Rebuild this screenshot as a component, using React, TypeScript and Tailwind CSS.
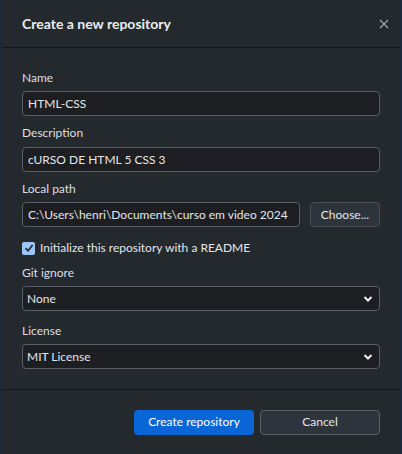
import { useState } from "react";

const Label = ({ text }: { text: string }) => (
  <div className="text-[12px] leading-[16px] text-[#dcdfe3] mb-[5px]">{text}</div>
);

const Chevron = () => (
  <svg width="10" height="10" viewBox="0 0 10 10" className="absolute right-[6px] top-[7px]">
    <path d="M1.5 3 L5 6.5 L8.5 3" stroke="#f0f0f0" strokeWidth="2" fill="none" />
  </svg>
);

const SelectBox = ({ value }: { value: string }) => (
  <div className="relative h-[25px] w-full rounded-[4px] border border-[#5b6068] bg-[#1c1e22] pl-[4px] text-[12px] leading-[23px] text-[#e4e6e9]">
    {value}
    <Chevron />
  </div>
);

const App = () => {
  const [name, setName] = useState("HTML-CSS");
  const [desc, setDesc] = useState("cURSO DE HTML 5 CSS 3");
  const [path, setPath] = useState("C:\\Users\\henri\\Documents\\curso em video 2024");
  const [readme, setReadme] = useState(true);

  const inputCls =
    "h-[25px] w-full rounded-[4px] border border-[#5b6068] bg-[#1c1e22] px-[5px] text-[12px] text-[#e4e6e9] outline-none";

  return (
    <div className="h-[454px] w-[402px] bg-[#1b2a3a] pl-[2px] pr-[2px]" style={{ fontFamily: 'Lato, "Noto Sans", sans-serif' }}>
      <div className="flex h-full flex-col bg-[#24292e]">
        <div className="flex h-[48px] items-center justify-between border-b border-[#131518] pl-[20px] pr-[11px]">
          <div className="text-[14px] font-bold text-[#eceef0]">Create a new repository</div>
          <svg width="10" height="10" viewBox="0 0 10 10">
            <path d="M1 1 L9 9 M9 1 L1 9" stroke="#9aa0a6" strokeWidth="1.3" />
          </svg>
        </div>

        <div className="flex flex-col px-[20px] pt-[22px] pr-[20px]">
          <Label text="Name" />
          <input value={name} onChange={(e) => setName(e.target.value)} className={inputCls} />

          <div className="mt-[9px]">
            <Label text="Description" />
            <input value={desc} onChange={(e) => setDesc(e.target.value)} className={inputCls} />
          </div>

          <div className="mt-[9px]">
            <Label text="Local path" />
            <div className="flex gap-[10px]">
              <input value={path} onChange={(e) => setPath(e.target.value)} className={inputCls + " flex-1"} />
              <button className="h-[25px] w-[70px] shrink-0 rounded-[4px] border border-[#4a5058] bg-[#2e343c] text-[12px] text-[#e4e6e9]">
                Choose...
              </button>
            </div>
          </div>

          <label className="mt-[12px] flex items-center gap-[5px] text-[12px] text-[#e4e6e9]">
            <span
              onClick={() => setReadme(!readme)}
              className="flex h-[13px] w-[13px] items-center justify-center rounded-[2px] bg-[#9bc4f7]"
            >
              {readme && (
                <svg width="10" height="10" viewBox="0 0 10 10">
                  <path d="M1.5 5.2 L4 7.8 L8.6 2" stroke="#1d232b" strokeWidth="1.6" fill="none" />
                </svg>
              )}
            </span>
            Initialize this repository with a README
          </label>

          <div className="mt-[8px]">
            <Label text="Git ignore" />
            <SelectBox value="None" />
          </div>

          <div className="mt-[12px]">
            <Label text="License" />
            <SelectBox value="MIT License" />
          </div>
        </div>

        <div className="mt-auto flex h-[65px] items-center justify-end gap-[6px] border-t border-[#131518] pr-[20px]">
          <button className="h-[25px] w-[120px] rounded-[4px] bg-[#0a66d6] text-[12px] text-white">Create repository</button>
          <button className="h-[25px] w-[120px] rounded-[4px] border border-[#5b6068] bg-[#2e343c] text-[12px] text-[#e4e6e9]">
            Cancel
          </button>
        </div>
      </div>
    </div>
  );
};

export default App;
